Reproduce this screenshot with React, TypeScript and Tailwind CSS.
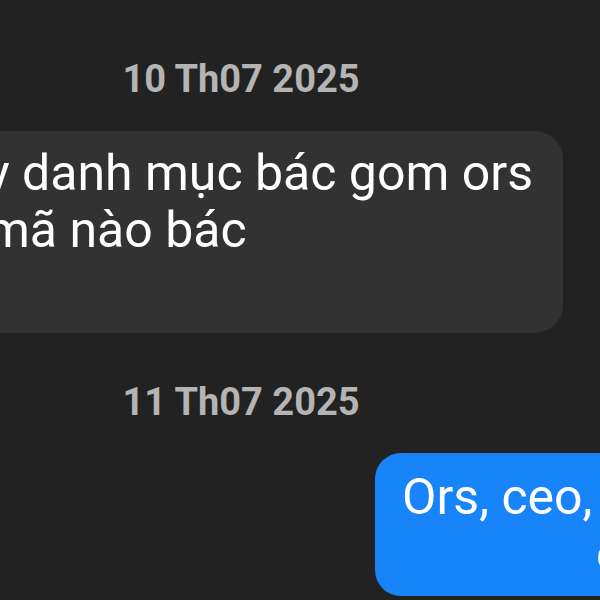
export default function App() {
  return (
    <div className="w-[600px] h-[600px] overflow-hidden bg-[#222222] font-['Roboto','Liberation_Sans',sans-serif]">
      <div className="flex flex-col">
        <div className="mt-[60px] w-[482px] text-center text-[38px] leading-none font-bold text-[#b4b4b4]">
          10 Th07 2025
        </div>

        <div className="mt-[33px] -ml-[40px] self-start rounded-[28px] bg-[#323232] pl-[26px] pr-[30px] pt-[14px] pb-[74px] text-[50px] leading-[57px] text-white whitespace-nowrap">
          <p>y danh mục bác gom ors</p>
          <p>mã nào bác</p>
        </div>

        <div className="mt-[50px] w-[482px] text-center text-[38px] leading-none font-bold text-[#b4b4b4]">
          11 Th07 2025
        </div>

        <div className="mt-[32px] ml-[375px] w-[420px] shrink-0 rounded-[26px] bg-[#1784fa] pl-[27px] pt-[16px] pb-[13px] text-[50px] leading-[57px] text-white whitespace-nowrap">
          <p>Ors, ceo, đt</p>
          <p className="pl-[194px]">cs</p>
        </div>
      </div>
    </div>
  )
}
